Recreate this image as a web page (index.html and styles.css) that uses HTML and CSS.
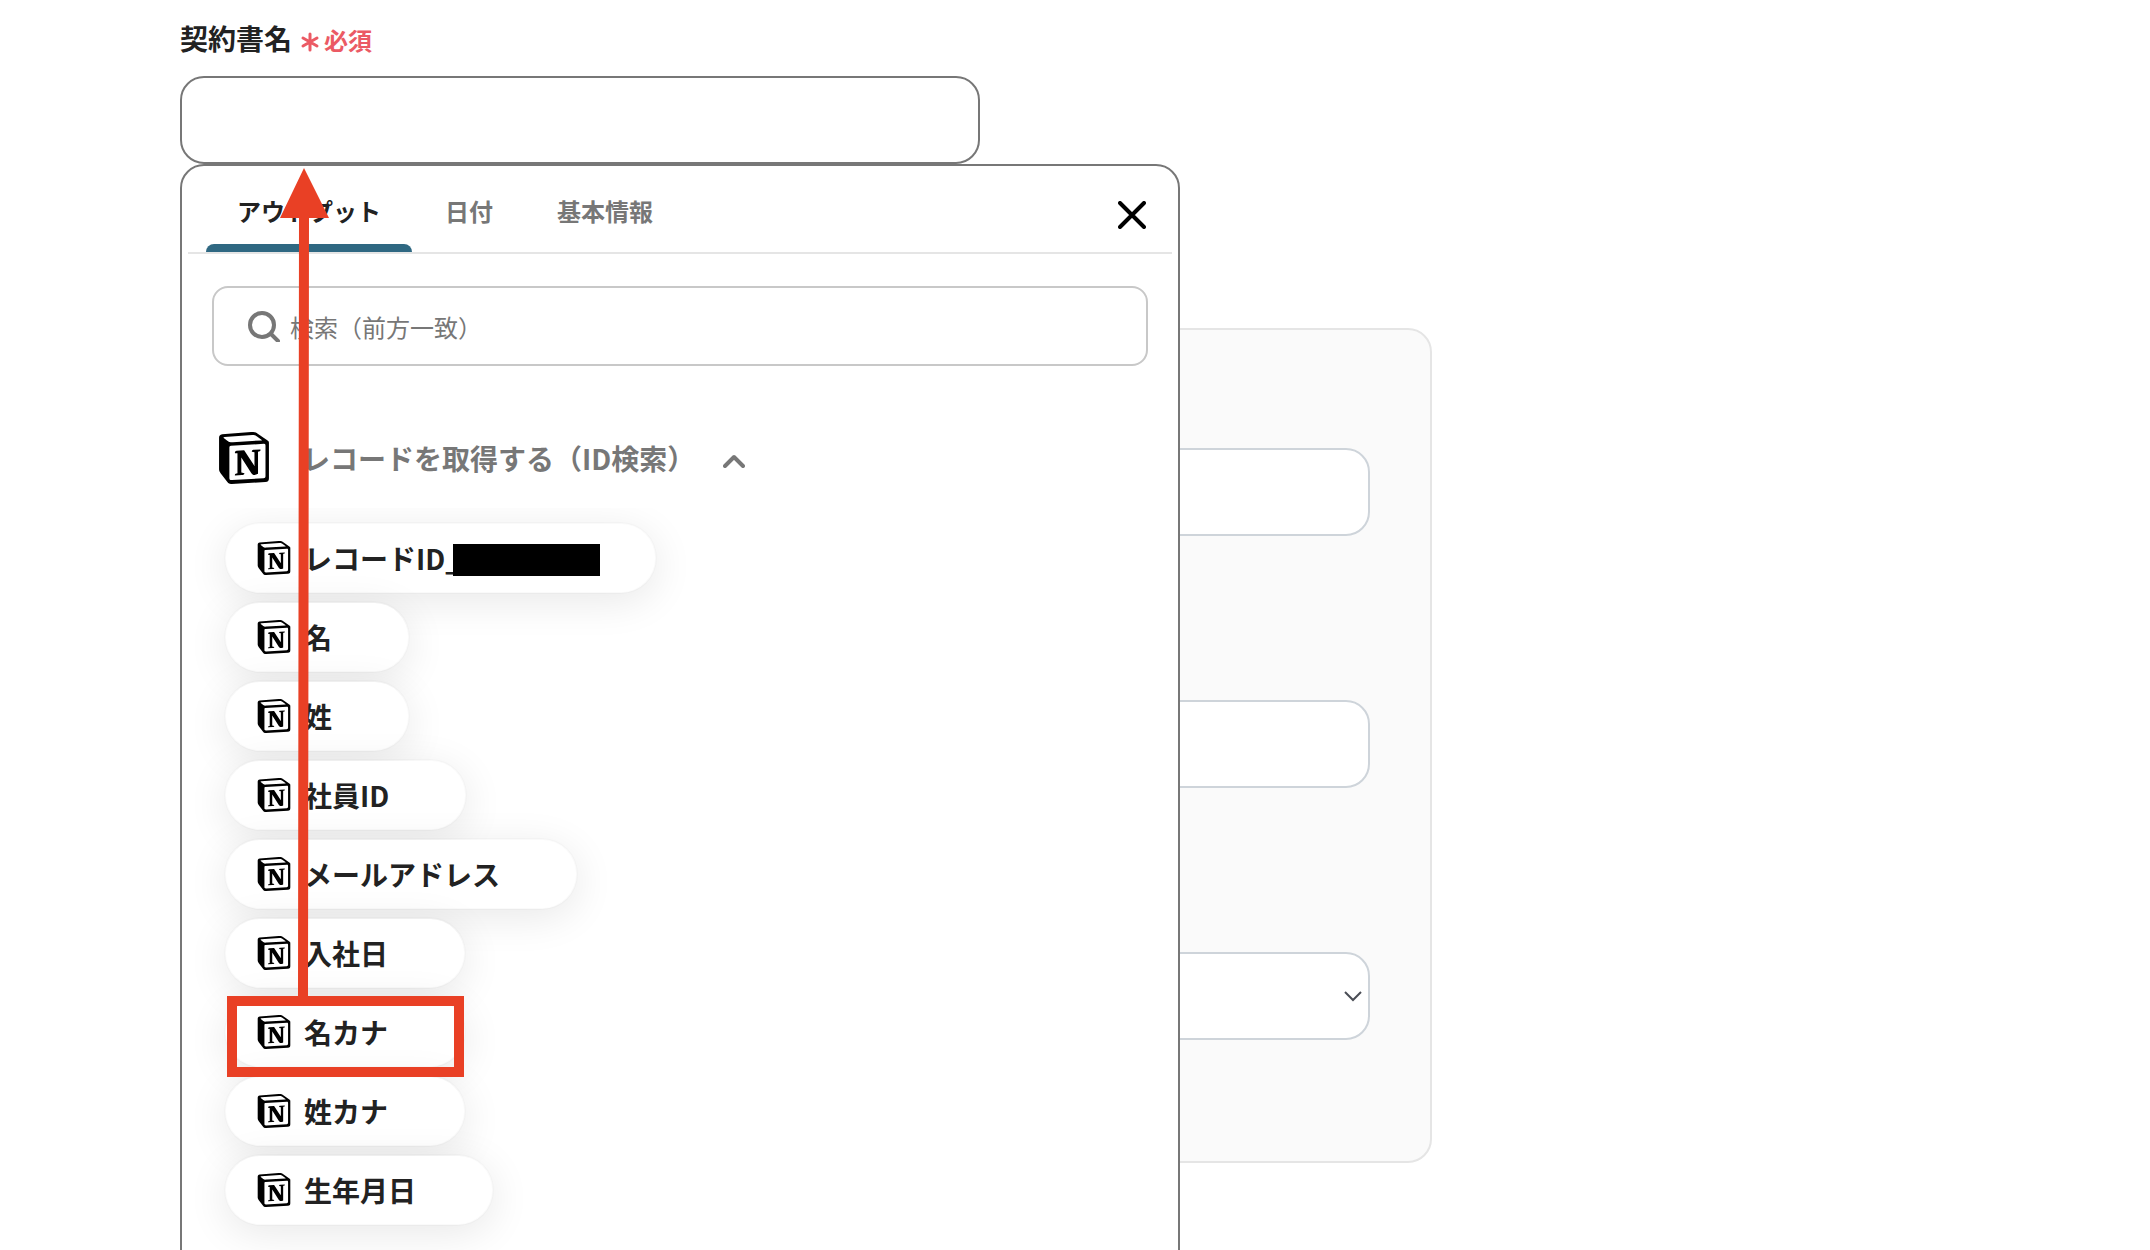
FILE: index.html
```html
<!DOCTYPE html>
<html lang="ja">
<head>
    <meta charset="UTF-8">
    <meta name="viewport" content="width=device-width, initial-scale=1.0">
    <title>契約書名の設定</title>
    <link rel="stylesheet" href="styles.css">
</head>
<body>
    <!-- アイコンの定義 -->
    <svg class="sprite" aria-hidden="true">
        <symbol id="notion" viewBox="0 0 24 24">
            <path d="M4.459 4.208c.746.606 1.026.56 2.428.466l13.215-.793c.28 0 .047-.28-.046-.326L17.86 1.968c-.42-.326-.981-.7-2.055-.607L3.01 2.295c-.466.046-.56.28-.374.466zm.793 3.08v13.904c0 .747.373 1.027 1.214.98l14.523-.84c.841-.046.935-.56.935-1.167V6.354c0-.606-.233-.933-.748-.887l-15.177.887c-.56.047-.747.327-.747.933zm14.337.745c.093.42 0 .84-.42.888l-.7.14v10.264c-.608.327-1.168.514-1.635.514-.748 0-.935-.234-1.495-.933l-4.577-7.186v6.952L12.21 19s0 .84-1.168.84l-3.222.186c-.093-.186 0-.653.327-.746l.84-.233V9.854L7.822 9.76c-.094-.42.14-1.026.793-1.073l3.456-.233 4.764 7.279v-6.44l-1.215-.139c-.093-.514.28-.887.747-.933zM1.936 1.035l13.31-.98c1.634-.14 2.055-.047 3.082.7l4.249 2.986c.7.513.934.653.934 1.213v16.378c0 1.026-.373 1.634-1.68 1.726l-15.458.934c-.98.047-1.448-.093-1.962-.747l-3.129-4.06c-.56-.747-.793-1.306-.793-1.96V2.667c0-.839.374-1.54 1.447-1.632z"/>
        </symbol>
    </svg>

    <main class="page">
        <form class="form">
            <label class="field-label" for="contract-name">
                契約書名
                <span class="required">
                    <svg class="asterisk" viewBox="0 0 20 20" aria-hidden="true"><path d="M10 2v16M3 6l14 8M17 6L3 14"/></svg>
                    必須
                </span>
            </label>

            <div class="field">
                <input class="text-input" id="contract-name" type="text">

                <!-- 入力候補のパネル -->
                <div class="picker">
                    <div class="tabs">
                        <button class="tab active" type="button">アウトプット</button>
                        <button class="tab" type="button">日付</button>
                        <button class="tab" type="button">基本情報</button>
                        <button class="close" type="button" aria-label="閉じる">
                            <svg viewBox="0 0 28 28"><path d="M2 2l24 24M26 2L2 26"/></svg>
                        </button>
                    </div>

                    <div class="search">
                        <svg class="search-icon" viewBox="0 0 32 32" aria-hidden="true"><circle cx="14" cy="15" r="12"/><path d="M23 24l7 7"/></svg>
                        <input class="search-input" type="search" placeholder="検索（前方一致）" aria-label="検索">
                    </div>

                    <button class="group" type="button">
                        <svg class="group-logo" aria-hidden="true"><use href="#notion"/></svg>
                        <span>レコードを取得する（ID検索）</span>
                        <svg class="group-arrow" viewBox="0 0 22 14" aria-hidden="true"><path d="M2 12l9-9 9 9"/></svg>
                    </button>

                    <div class="chips">
                        <button class="chip" type="button"><svg class="chip-logo"><use href="#notion"/></svg>レコードID_<span class="redacted"></span></button>
                        <button class="chip" type="button"><svg class="chip-logo"><use href="#notion"/></svg>名</button>
                        <button class="chip" type="button"><svg class="chip-logo"><use href="#notion"/></svg>姓</button>
                        <button class="chip" type="button"><svg class="chip-logo"><use href="#notion"/></svg>社員ID</button>
                        <button class="chip" type="button"><svg class="chip-logo"><use href="#notion"/></svg>メールアドレス</button>
                        <button class="chip" type="button"><svg class="chip-logo"><use href="#notion"/></svg>入社日</button>
                        <button class="chip" type="button"><svg class="chip-logo"><use href="#notion"/></svg>名カナ</button>
                        <button class="chip" type="button"><svg class="chip-logo"><use href="#notion"/></svg>姓カナ</button>
                        <button class="chip" type="button"><svg class="chip-logo"><use href="#notion"/></svg>生年月日</button>
                    </div>
                </div>
            </div>

            <!-- パネルの後ろのカード -->
            <div class="card">
                <input class="text-input" type="text" aria-label="項目1">
                <input class="text-input" type="text" aria-label="項目2">
                <div class="select-wrap">
                    <select class="text-input" aria-label="項目3"><option></option></select>
                    <svg class="select-arrow" viewBox="0 0 18 11" aria-hidden="true"><path d="M1 1l8 8 8-8"/></svg>
                </div>
            </div>
        </form>

        <!-- 説明用の赤い枠と矢印 -->
        <svg class="guide" viewBox="0 0 240 912" aria-hidden="true">
            <path class="guide-fill" d="M77 0l25 50H82L81 830H71L72 50H53z"/>
            <rect class="guide-box" x="5" y="833" width="227" height="71"/>
        </svg>
    </main>
</body>
</html>
```

FILE: styles.css
```css
* {
    box-sizing: border-box;
}

body {
    margin: 0;
    background-color: #fff;
    color: #222;
    font-family: "Noto Sans CJK JP", sans-serif;
}

button,
input,
select {
    font-family: inherit;
    color: inherit;
}

button {
    padding: 0;
    border: 0;
    background: none;
    font-weight: 700;
    cursor: pointer;
}

svg {
    flex: none;
}

.sprite {
    position: absolute;
    width: 0;
    height: 0;
}

.page {
    position: relative;
    height: 100vh;
    min-height: 1250px;
    overflow: hidden;
    padding: 18px 24px 0 180px;
}

.form {
    max-width: 1252px;
}

/* ラベル */
.field-label {
    display: flex;
    align-items: center;
    gap: 8px;
    height: 40px;
    margin-bottom: 18px;
    font-size: 28px;
    font-weight: 700;
}

.required {
    display: flex;
    align-items: center;
    gap: 4px;
    padding-top: 2px;
    color: #eb5a64;
    font-size: 24px;
}

.asterisk {
    width: 20px;
    height: 20px;
    margin-top: 6px;
    fill: none;
    stroke: currentColor;
    stroke-width: 3;
    stroke-linecap: round;
}

/* 入力欄 */
.field {
    position: relative;
    margin-bottom: 164px;
}

.text-input {
    display: block;
    width: 100%;
    height: 88px;
    padding: 0 32px;
    border: 2px solid #ced4da;
    border-radius: 24px;
    background-color: #fff;
    font-size: 28px;
    appearance: none;
}

.field .text-input {
    max-width: 800px;
    border-color: #777;
}

/* 候補パネル */
.picker {
    position: absolute;
    top: 100%;
    left: 0;
    z-index: 1;
    width: 100%;
    max-width: 1000px;
    padding-bottom: 80px;
    border: 2px solid #777;
    border-radius: 24px;
    background-color: #fff;
}

.tabs {
    display: flex;
    gap: 2px;
    height: 88px;
    margin: 0 6px;
    padding: 0 26px 0 18px;
    border-bottom: 2px solid #e5e5e5;
}

.tab {
    padding: 10px 31px 0;
    border-bottom: 8px solid transparent;
    color: #777;
    font-size: 24px;
}

.tab.active {
    position: relative;
    color: #222;
}

.tab.active::after {
    content: "";
    position: absolute;
    right: 0;
    bottom: -8px;
    left: 0;
    height: 8px;
    border-radius: 8px 8px 0 0;
    background-color: #2f6882;
}

.close {
    margin-left: auto;
    padding-top: 12px;
}

.close svg {
    display: block;
    width: 28px;
    height: 28px;
    fill: none;
    stroke: #000;
    stroke-width: 4;
    stroke-linecap: round;
}

/* 検索 */
.search {
    display: flex;
    align-items: center;
    gap: 10px;
    height: 80px;
    margin: 32px 30px 34px;
    padding: 0 32px 0 34px;
    border: 2px solid #c8c8c8;
    border-radius: 16px;
}

.search-icon {
    width: 32px;
    height: 32px;
    fill: none;
    stroke: #777;
    stroke-width: 4;
    stroke-linecap: round;
}

.search-input {
    flex: 1;
    min-width: 0;
    padding: 0;
    border: 0;
    outline: 0;
    background: none;
    font-size: 24px;
    appearance: none;
}

.search-input::placeholder {
    color: #777;
    opacity: 1;
}

/* グループの見出し */
.group {
    display: flex;
    align-items: center;
    height: 108px;
    padding: 8px 36px 0;
    color: #777;
    font-size: 28px;
}

.group-logo {
    width: 52px;
    height: 52px;
    margin-right: 32px;
    fill: #000;
}

.group-arrow {
    width: 22px;
    height: 14px;
    margin-top: 6px;
    margin-left: 28px;
    fill: none;
    stroke: #777;
    stroke-width: 4;
    stroke-linecap: round;
    stroke-linejoin: round;
}

/* アウトプットの一覧 */
.chips {
    display: flex;
    flex-direction: column;
    align-items: flex-start;
    gap: 7px;
    overflow: hidden;
    padding: 14px 42px 40px;
}

.chip {
    display: flex;
    align-items: center;
    height: 72px;
    padding: 0 76px 0 31px;
    border: 2px solid rgba(0, 0, 0, 0.02);
    border-radius: 36px;
    background-color: #fff;
    background-clip: padding-box;
    box-shadow: 0 8px 40px rgba(0, 0, 0, 0.09);
    font-size: 28px;
}

.chip-logo {
    width: 34px;
    height: 34px;
    margin-right: 13px;
    fill: #000;
}

.redacted {
    width: 147px;
    height: 32px;
    margin-top: 4px;
    margin-right: -21px;
    margin-left: -8px;
    background-color: #000;
}

/* カード */
.card {
    display: flex;
    flex-direction: column;
    gap: 164px;
    padding: 118px 60px 121px;
    border: 2px solid #e5e5e5;
    border-radius: 24px;
    background-color: #fafafa;
}

.select-wrap {
    position: relative;
}

.select-arrow {
    position: absolute;
    top: 39px;
    right: 8px;
    width: 18px;
    height: 11px;
    fill: none;
    stroke: #4a4d55;
    stroke-width: 2;
}

/* 赤い枠と矢印 */
.guide {
    position: absolute;
    top: 168px;
    left: 227px;
    z-index: 2;
    width: 240px;
    height: 912px;
    pointer-events: none;
}

.guide-fill {
    fill: #e94025;
}

.guide-box {
    fill: none;
    stroke: #e94025;
    stroke-width: 10;
}
```
